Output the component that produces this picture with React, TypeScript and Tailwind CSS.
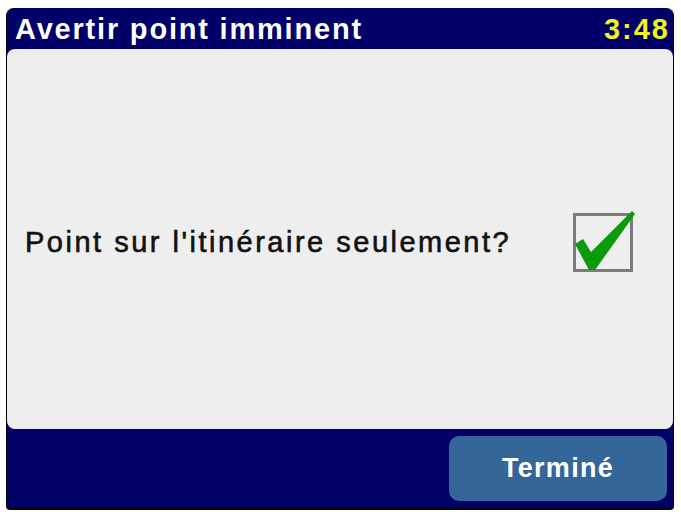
export default function App() {
  return (
    <div className="w-[681px] h-[512px] bg-white pt-[8px] pl-[6px]">
      <div className="w-[668px] h-[502px] flex flex-col bg-[#000068] border-x border-b-2 border-black rounded-t-lg rounded-b-sm overflow-hidden">
        {/* Title bar */}
        <div className="h-[41px] flex items-center justify-between pl-[8px] pr-[3px] pt-[1px] font-['Liberation_Sans',Arial,sans-serif] font-bold text-[29px] tracking-[1.8px] leading-none">
          <span className="text-white">Avertir point imminent</span>
          <span className="text-[#f2f21c] tracking-[2px]">3:48</span>
        </div>

        {/* Option panel */}
        <div className="flex-1 flex items-center bg-[#eeeeee] rounded-lg pt-[6px] pl-[18px] pr-[40px]">
          <span className="font-['Liberation_Sans',Arial,sans-serif] text-[29px] tracking-[2.5px] text-[#111111] leading-none [-webkit-text-stroke:0.6px_#111111]">
            Point sur l'itinéraire seulement?
          </span>
          <div className="relative ml-auto w-[60px] h-[59px] border-[3px] border-[#7b7b7b]">
            <svg
              className="absolute -left-[3px] -top-[3px] overflow-visible"
              width="60"
              height="59"
              viewBox="0 0 60 59"
            >
              <polygon
                points="2,31 10,26 18,39 59,-2 62,1 22,57 16,57"
                fill="#0a9a0a"
              />
            </svg>
          </div>
        </div>

        {/* Bottom bar */}
        <div className="h-[79px] flex justify-end items-start pt-[7px] pr-[6px]">
          <button className="w-[218px] h-[65px] rounded-[10px] bg-[#35669a] text-white font-['Liberation_Sans',Arial,sans-serif] font-bold text-[27px] tracking-[1.3px]">
            Terminé
          </button>
        </div>
      </div>
    </div>
  );
}
